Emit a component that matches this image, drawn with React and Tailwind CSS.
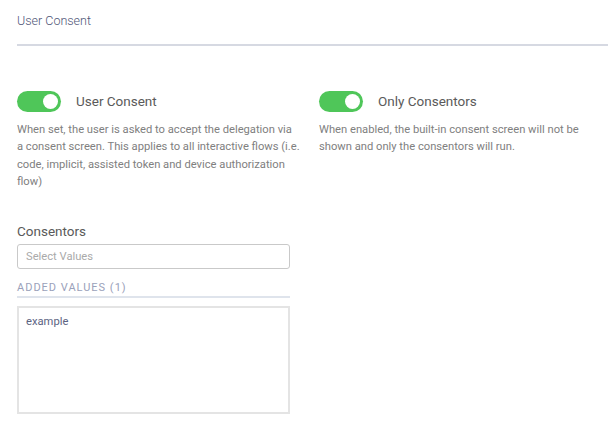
import React, { useState } from 'react';

const Toggle = ({ on, onChange }) => (
  <button
    onClick={() => onChange(!on)}
    className={`relative w-[44px] h-[21px] rounded-full shrink-0 ${on ? 'bg-[#4fc659]' : 'bg-[#cfd3da]'}`}
  >
    <span
      className={`absolute top-[3px] w-[15px] h-[15px] rounded-full bg-white ${on ? 'left-[26px]' : 'left-[3px]'}`}
    />
  </button>
);

const App = () => {
  const [userConsent, setUserConsent] = useState(true);
  const [onlyConsentors, setOnlyConsentors] = useState(true);

  return (
    <div className="w-[608px] h-[436px] bg-white pl-[17px] overflow-hidden font-['Roboto',sans-serif]">
      <div className="pt-[12px] h-[44px] text-[12.5px] font-light text-[#4f5677]">User Consent</div>
      <div className="h-[2px] bg-[#d6d9e2]" />

      <div className="grid grid-cols-[281px_1fr] gap-x-[21px] mt-[45px]">
        <div>
          <div className="flex items-center gap-[15px]">
            <Toggle on={userConsent} onChange={setUserConsent} />
            <span className="text-[13.5px] text-[#5a5a5a] leading-[21px]">User Consent</span>
          </div>
          <p className="mt-[9px] text-[11.2px] leading-[17.4px] text-[#808080] whitespace-nowrap">
            When set, the user is asked to accept the delegation via<br />
            a consent screen. This applies to all interactive flows (i.e.<br />
            code, implicit, assisted token and device authorization<br />
            flow)
          </p>
        </div>
        <div>
          <div className="flex items-center gap-[15px]">
            <Toggle on={onlyConsentors} onChange={setOnlyConsentors} />
            <span className="text-[13.5px] text-[#5a5a5a] leading-[21px]">Only Consentors</span>
          </div>
          <p className="mt-[9px] text-[11.2px] leading-[17.4px] text-[#808080] pr-[10px]">
            When enabled, the built-in consent screen will not be shown and only the consentors will run.
          </p>
        </div>
      </div>

      <div className="w-[273px] mt-[31px]">
        <div className="text-[13.5px] text-[#5a5a5a] leading-[18px]">Consentors</div>
        <input
          type="text"
          placeholder="Select Values"
          className="mt-[4px] w-full h-[25px] px-[8px] border border-[#c9c9c9] rounded-[3px] text-[11.2px] text-[#444] placeholder:text-[#aaa] outline-none"
        />
        <div className="mt-[12px] text-[11px] tracking-[1px] text-[#9aa1ba] leading-[14px]">ADDED VALUES (1)</div>
        <div className="mt-[1px] h-[2px] bg-[#dfe4ec]" />
        <div className="mt-[8px] h-[108px] border-2 border-[#e4e4e4] px-[7px] pt-[6px]">
          <div className="text-[11.2px] text-[#5c6382]">example</div>
        </div>
      </div>
    </div>
  );
};

export default App;
